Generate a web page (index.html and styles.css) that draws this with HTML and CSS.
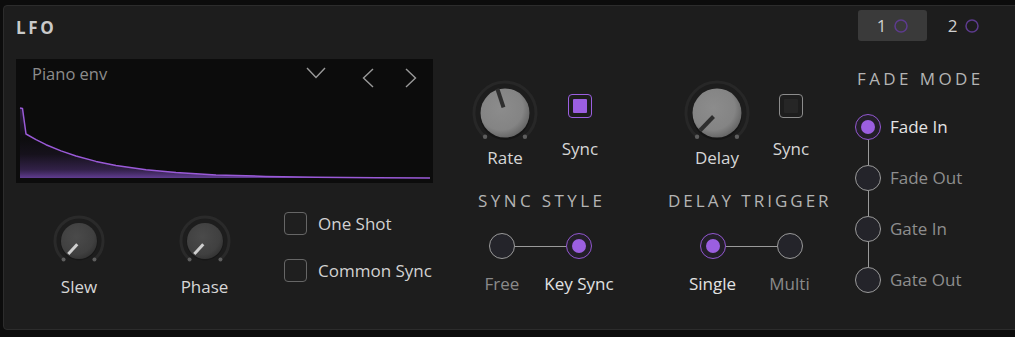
FILE: index.html
```html
<!DOCTYPE html>
<html>
<head>
<meta charset="utf-8">
<link rel="stylesheet" href="styles.css">
</head>
<body>
<div class="panel">
  <div class="col-left">
    <div class="title">LFO</div>
    <div class="display">
      <div class="display-head">
        <span class="preset">Piano env</span>
        <svg class="ico-down" width="20" height="12" viewBox="0 0 20 12"><path d="M1 1 L10 10.5 L19 1" fill="none" stroke="#9a9a9a" stroke-width="1.4"/></svg>
        <svg class="ico-arrow ico-left" width="12" height="20" viewBox="0 0 12 20"><path d="M11 1 L1.5 10 L11 19" fill="none" stroke="#9a9a9a" stroke-width="1.4"/></svg>
        <svg class="ico-arrow ico-right" width="12" height="20" viewBox="0 0 12 20"><path d="M1 1 L10.5 10 L1 19" fill="none" stroke="#9a9a9a" stroke-width="1.4"/></svg>
      </div>
      <svg class="wave" width="417" height="94" viewBox="0 30 417 94">
        <defs>
          <linearGradient id="wf" gradientUnits="userSpaceOnUse" x1="0" y1="76" x2="0" y2="119">
            <stop offset="0" stop-color="#5e3a8e" stop-opacity="0"/>
            <stop offset="0.45" stop-color="#5e3a8e" stop-opacity="0.12"/>
            <stop offset="0.8" stop-color="#5e3a8e" stop-opacity="0.45"/>
            <stop offset="1" stop-color="#6a42a0" stop-opacity="0.9"/>
          </linearGradient>
          <linearGradient id="sf" gradientUnits="userSpaceOnUse" x1="0" y1="49" x2="0" y2="80">
            <stop offset="0" stop-color="#5e3a8e" stop-opacity="0.45"/>
            <stop offset="1" stop-color="#5e3a8e" stop-opacity="0"/>
          </linearGradient>
        </defs>
        <polygon points="4,49 6.5,49.5 10,75 10,119 4,119" fill="url(#sf)"/>
        <polygon points="10,75 20,80.7 30,85.7 45,91.9 60,97 80,102.4 100,106.4 130,110.7 160,113.5 200,115.9 250,117.4 300,118.2 360,118.7 414,119 414,119 4,119 4,76" fill="url(#wf)"/>
        <polyline points="4,49 6.5,49.5 10,75 20,80.7 30,85.7 45,91.9 60,97 80,102.4 100,106.4 130,110.7 160,113.5 200,115.9 250,117.4 300,118.2 360,118.7 414,119" fill="none" stroke="#9a5ad8" stroke-width="1.5" stroke-linejoin="round"/>
      </svg>
    </div>
    <div class="controls">
      <div class="knob-cell">
        <svg width="54" height="54" viewBox="0 0 54 54">
          <defs>
            <radialGradient id="sk" cx="0.42" cy="0.38" r="0.65">
              <stop offset="0" stop-color="#4a4a4a"/>
              <stop offset="0.75" stop-color="#404040"/>
              <stop offset="1" stop-color="#333"/>
            </radialGradient>
          </defs>
          <path d="M11.57 45.38 A24 24 0 1 1 42.43 45.38" fill="none" stroke="#2a2a2a" stroke-width="3"/>
          <circle cx="11.57" cy="45.38" r="2" fill="#5e5e5e"/>
          <circle cx="42.43" cy="45.38" r="2" fill="#5e5e5e"/>
          <circle cx="27" cy="28" r="18.5" fill="#141414" opacity="0.6"/>
          <circle cx="27" cy="27" r="18" fill="url(#sk)"/>
          <line x1="16.3" y1="40" x2="25.3" y2="30.3" stroke="#cfcfcf" stroke-width="3"/>
        </svg>
        <div class="klabel">Slew</div>
      </div>
      <div class="knob-cell">
        <svg width="54" height="54" viewBox="0 0 54 54">
          <path d="M11.57 45.38 A24 24 0 1 1 42.43 45.38" fill="none" stroke="#2a2a2a" stroke-width="3"/>
          <circle cx="11.57" cy="45.38" r="2" fill="#5e5e5e"/>
          <circle cx="42.43" cy="45.38" r="2" fill="#5e5e5e"/>
          <circle cx="27" cy="28" r="18.5" fill="#141414" opacity="0.6"/>
          <circle cx="27" cy="27" r="18" fill="url(#sk)"/>
          <line x1="16.3" y1="40" x2="25.3" y2="30.3" stroke="#cfcfcf" stroke-width="3"/>
        </svg>
        <div class="klabel">Phase</div>
      </div>
      <div class="checks">
        <div class="check-row"><span class="cbox"></span><span class="clabel">One Shot</span></div>
        <div class="check-row"><span class="cbox"></span><span class="clabel">Common Sync</span></div>
      </div>
    </div>
  </div>

  <div class="col-mid">
    <div class="group group-a">
      <div class="top-row">
        <div class="bigknob">
          <svg width="66" height="66" viewBox="0 0 66 66">
            <defs>
              <radialGradient id="bk" cx="0.42" cy="0.4" r="0.62">
                <stop offset="0" stop-color="#8c8c8c"/>
                <stop offset="0.72" stop-color="#848484"/>
                <stop offset="1" stop-color="#666"/>
              </radialGradient>
            </defs>
            <path d="M13.07 56.75 A31 31 0 1 1 52.93 56.75" fill="none" stroke="#272727" stroke-width="3"/>
            <circle cx="13.07" cy="56.75" r="2.2" fill="#5e5e5e"/>
            <circle cx="52.93" cy="56.75" r="2.2" fill="#5e5e5e"/>
            <circle cx="33" cy="35" r="25" fill="#111" opacity="0.6"/>
            <circle cx="33" cy="33" r="24.5" fill="url(#bk)"/>
            <line x1="25.3" y1="8.6" x2="31.5" y2="27.3" stroke="#2e2e2e" stroke-width="4"/>
          </svg>
          <div class="klabel">Rate</div>
        </div>
        <div class="sync">
          <span class="sbox on"><span class="sfill"></span></span>
          <div class="klabel">Sync</div>
        </div>
      </div>
      <div class="section">SYNC STYLE</div>
      <div class="pair">
        <div class="opt"><span class="radio"></span><span class="rlabel dim">Free</span></div>
        <span class="hline"></span>
        <div class="opt"><span class="radio on"></span><span class="rlabel">Key Sync</span></div>
      </div>
    </div>

    <div class="group group-b">
      <div class="top-row">
        <div class="bigknob">
          <svg width="66" height="66" viewBox="0 0 66 66">
            <path d="M13.07 56.75 A31 31 0 1 1 52.93 56.75" fill="none" stroke="#272727" stroke-width="3"/>
            <circle cx="13.07" cy="56.75" r="2.2" fill="#5e5e5e"/>
            <circle cx="52.93" cy="56.75" r="2.2" fill="#5e5e5e"/>
            <circle cx="33" cy="35" r="25" fill="#111" opacity="0.6"/>
            <circle cx="33" cy="33" r="24.5" fill="url(#bk)"/>
            <line x1="16" y1="50.5" x2="29.5" y2="36.5" stroke="#2e2e2e" stroke-width="4"/>
          </svg>
          <div class="klabel">Delay</div>
        </div>
        <div class="sync">
          <span class="sbox"><span class="sfill"></span></span>
          <div class="klabel">Sync</div>
        </div>
      </div>
      <div class="section tight">DELAY TRIGGER</div>
      <div class="pair">
        <div class="opt"><span class="radio on"></span><span class="rlabel">Single</span></div>
        <span class="hline"></span>
        <div class="opt"><span class="radio"></span><span class="rlabel dim">Multi</span></div>
      </div>
    </div>
  </div>

  <div class="col-right">
    <div class="tabs">
      <div class="tab active"><span>1</span><svg width="14" height="14" viewBox="0 0 14 14"><circle cx="7" cy="7" r="6" fill="none" stroke="#5d3b8e" stroke-width="1.5"/></svg></div>
      <div class="tab"><span>2</span><svg width="14" height="14" viewBox="0 0 14 14"><circle cx="7" cy="7" r="6" fill="none" stroke="#5d3b8e" stroke-width="1.5"/></svg></div>
    </div>
    <div class="section fade-title">FADE MODE</div>
    <div class="vlist">
      <div class="vopt"><span class="radio on"></span><span class="vlabel bright">Fade In</span></div>
      <span class="vline"></span>
      <div class="vopt"><span class="radio"></span><span class="vlabel">Fade Out</span></div>
      <span class="vline"></span>
      <div class="vopt"><span class="radio"></span><span class="vlabel">Gate In</span></div>
      <span class="vline"></span>
      <div class="vopt"><span class="radio"></span><span class="vlabel">Gate Out</span></div>
    </div>
  </div>
</div>
</body>
</html>
```

FILE: styles.css
```css
* { box-sizing: border-box; }

html, body {
  margin: 0;
  padding: 0;
  background: #0c0c0c;
  font-family: "Open Sans", "Noto Sans", sans-serif;
  overflow: hidden;
}

.panel {
  margin: 5px 0 0 3px;
  width: 1030px;
  height: 325px;
  background: #1d1d1d;
  border: 1px solid #2c2c2c;
  border-radius: 4px;
  display: flex;
  align-items: flex-start;
}

/* ---------- left column ---------- */
.col-left {
  margin-left: 12px;
  width: 417px;
}

.title {
  padding-top: 12px;
  font-weight: 700;
  font-size: 17px;
  line-height: 20px;
  letter-spacing: 2.6px;
  color: #c9c9c9;
}

.display {
  margin-top: 21px;
  height: 124px;
  background: #0c0c0c;
  display: flex;
  flex-direction: column;
}

.display-head {
  height: 30px;
  display: flex;
  align-items: center;
  padding: 0 16px;
}

.preset {
  flex: 1;
  font-size: 16.5px;
  color: #8c8c8c;
  line-height: 20px;
}

.ico-down { margin-right: 36px; margin-top: -2px; }
.ico-arrow { margin-top: 8px; }
.ico-left { margin-right: 31px; }
.ico-right { margin-right: 0; }

.wave { display: block; }

.controls {
  display: grid;
  grid-template-columns: 126px 125px auto;
  margin-top: 31px;
}

.knob-cell {
  display: flex;
  flex-direction: column;
  align-items: center;
}

.knob-cell svg { display: block; }

.klabel {
  font-size: 17px;
  line-height: 20px;
  color: #d6d6d6;
  white-space: nowrap;
  margin-top: 9px;
}

.checks {
  padding-left: 17px;
  margin-top: -2px;
  display: flex;
  flex-direction: column;
  gap: 24px;
}

.check-row {
  display: flex;
  align-items: center;
  height: 23px;
}

.cbox {
  width: 23px;
  height: 23px;
  border: 1.5px solid #666;
  border-radius: 4px;
  background: #1f1f1f;
}

.clabel {
  margin-left: 11px;
  font-size: 17px;
  line-height: 20px;
  color: #d2d2d2;
  white-space: nowrap;
}

/* ---------- middle column ---------- */
.col-mid {
  margin-left: 39px;
  padding-top: 74px;
  display: flex;
  gap: 60px;
}

.group { display: flex; flex-direction: column; }
.group-a { width: 136px; }
.group-b { width: 165px; }
.group-b .top-row { padding-left: 16px; }

.top-row {
  display: flex;
  align-items: flex-start;
}

.bigknob {
  width: 66px;
  display: flex;
  flex-direction: column;
  align-items: center;
}
.bigknob svg { display: block; }
.bigknob .klabel { margin-top: 2px; }

.group-a .sync { margin-left: 22px; }
.group-b .sync { margin-left: 21px; }

.sync {
  width: 40px;
  display: flex;
  flex-direction: column;
  align-items: center;
  padding-top: 14px;
}

.sbox {
  width: 24px;
  height: 24px;
  border: 1.5px solid #8c8c8c;
  border-radius: 4px;
  display: flex;
  align-items: center;
  justify-content: center;
}
.sbox .sfill {
  width: 14px;
  height: 14px;
  background: #262626;
  border-radius: 1px;
}
.sbox.on { border-color: #9b5fe0; }
.sbox.on .sfill { background: #9b5fe0; }
.sync .klabel { margin-top: 21px; }

.section {
  margin-top: 23px;
  text-align: center;
  font-size: 17px;
  line-height: 20px;
  letter-spacing: 3.4px;
  padding-left: 3.4px;
  color: #b4b4b4;
  white-space: nowrap;
}
.section.tight {
  letter-spacing: 3px;
  padding-left: 0;
  margin-right: 4px;
}

.pair {
  margin-top: 22px;
  display: flex;
  justify-content: center;
  align-items: flex-start;
  padding-left: 1px;
}

.opt {
  width: 26px;
  display: flex;
  flex-direction: column;
  align-items: center;
}

.hline {
  width: 51px;
  height: 1px;
  background: #9a9a9a;
  margin-top: 12.5px;
}

.radio {
  width: 26px;
  height: 26px;
  border-radius: 50%;
  border: 1.5px solid #9a9a9a;
  background: #24242a;
  display: flex;
  align-items: center;
  justify-content: center;
  flex: none;
}
.radio.on {
  border-color: #9257d0;
  background: #231f29;
}
.radio.on::after {
  content: "";
  width: 14px;
  height: 14px;
  border-radius: 50%;
  background: #9b5fe0;
}

.rlabel {
  margin-top: 15px;
  font-size: 17px;
  line-height: 20px;
  color: #e2e2e2;
  white-space: nowrap;
  display: flex;
  justify-content: center;
  width: 26px;
}
.rlabel.dim { color: #8a8a8a; }

/* ---------- right column ---------- */
.col-right {
  margin-left: 22px;
}

.tabs {
  display: flex;
  margin-top: 4px;
  margin-left: 3px;
  gap: 2px;
}

.tab {
  width: 69px;
  height: 31px;
  border-radius: 3px;
  display: flex;
  align-items: center;
  justify-content: center;
  gap: 8px;
  font-size: 17px;
  color: #d0d0d0;
  line-height: 20px;
}
.tab svg { display: block; }
.tab.active { background: #3a3a3a; }

.fade-title {
  margin-top: 28px;
  text-align: left;
  padding-left: 2px;
}

.vlist {
  margin-top: 25px;
  display: flex;
  flex-direction: column;
}

.vopt {
  display: flex;
  align-items: center;
  height: 26px;
}

.vline {
  width: 1px;
  height: 25px;
  background: #9a9a9a;
  margin-left: 12.5px;
}

.vlabel {
  margin-left: 9px;
  font-size: 17px;
  line-height: 20px;
  color: #8e8e8e;
  white-space: nowrap;
}
.vlabel.bright { color: #e4e4e4; }
```
